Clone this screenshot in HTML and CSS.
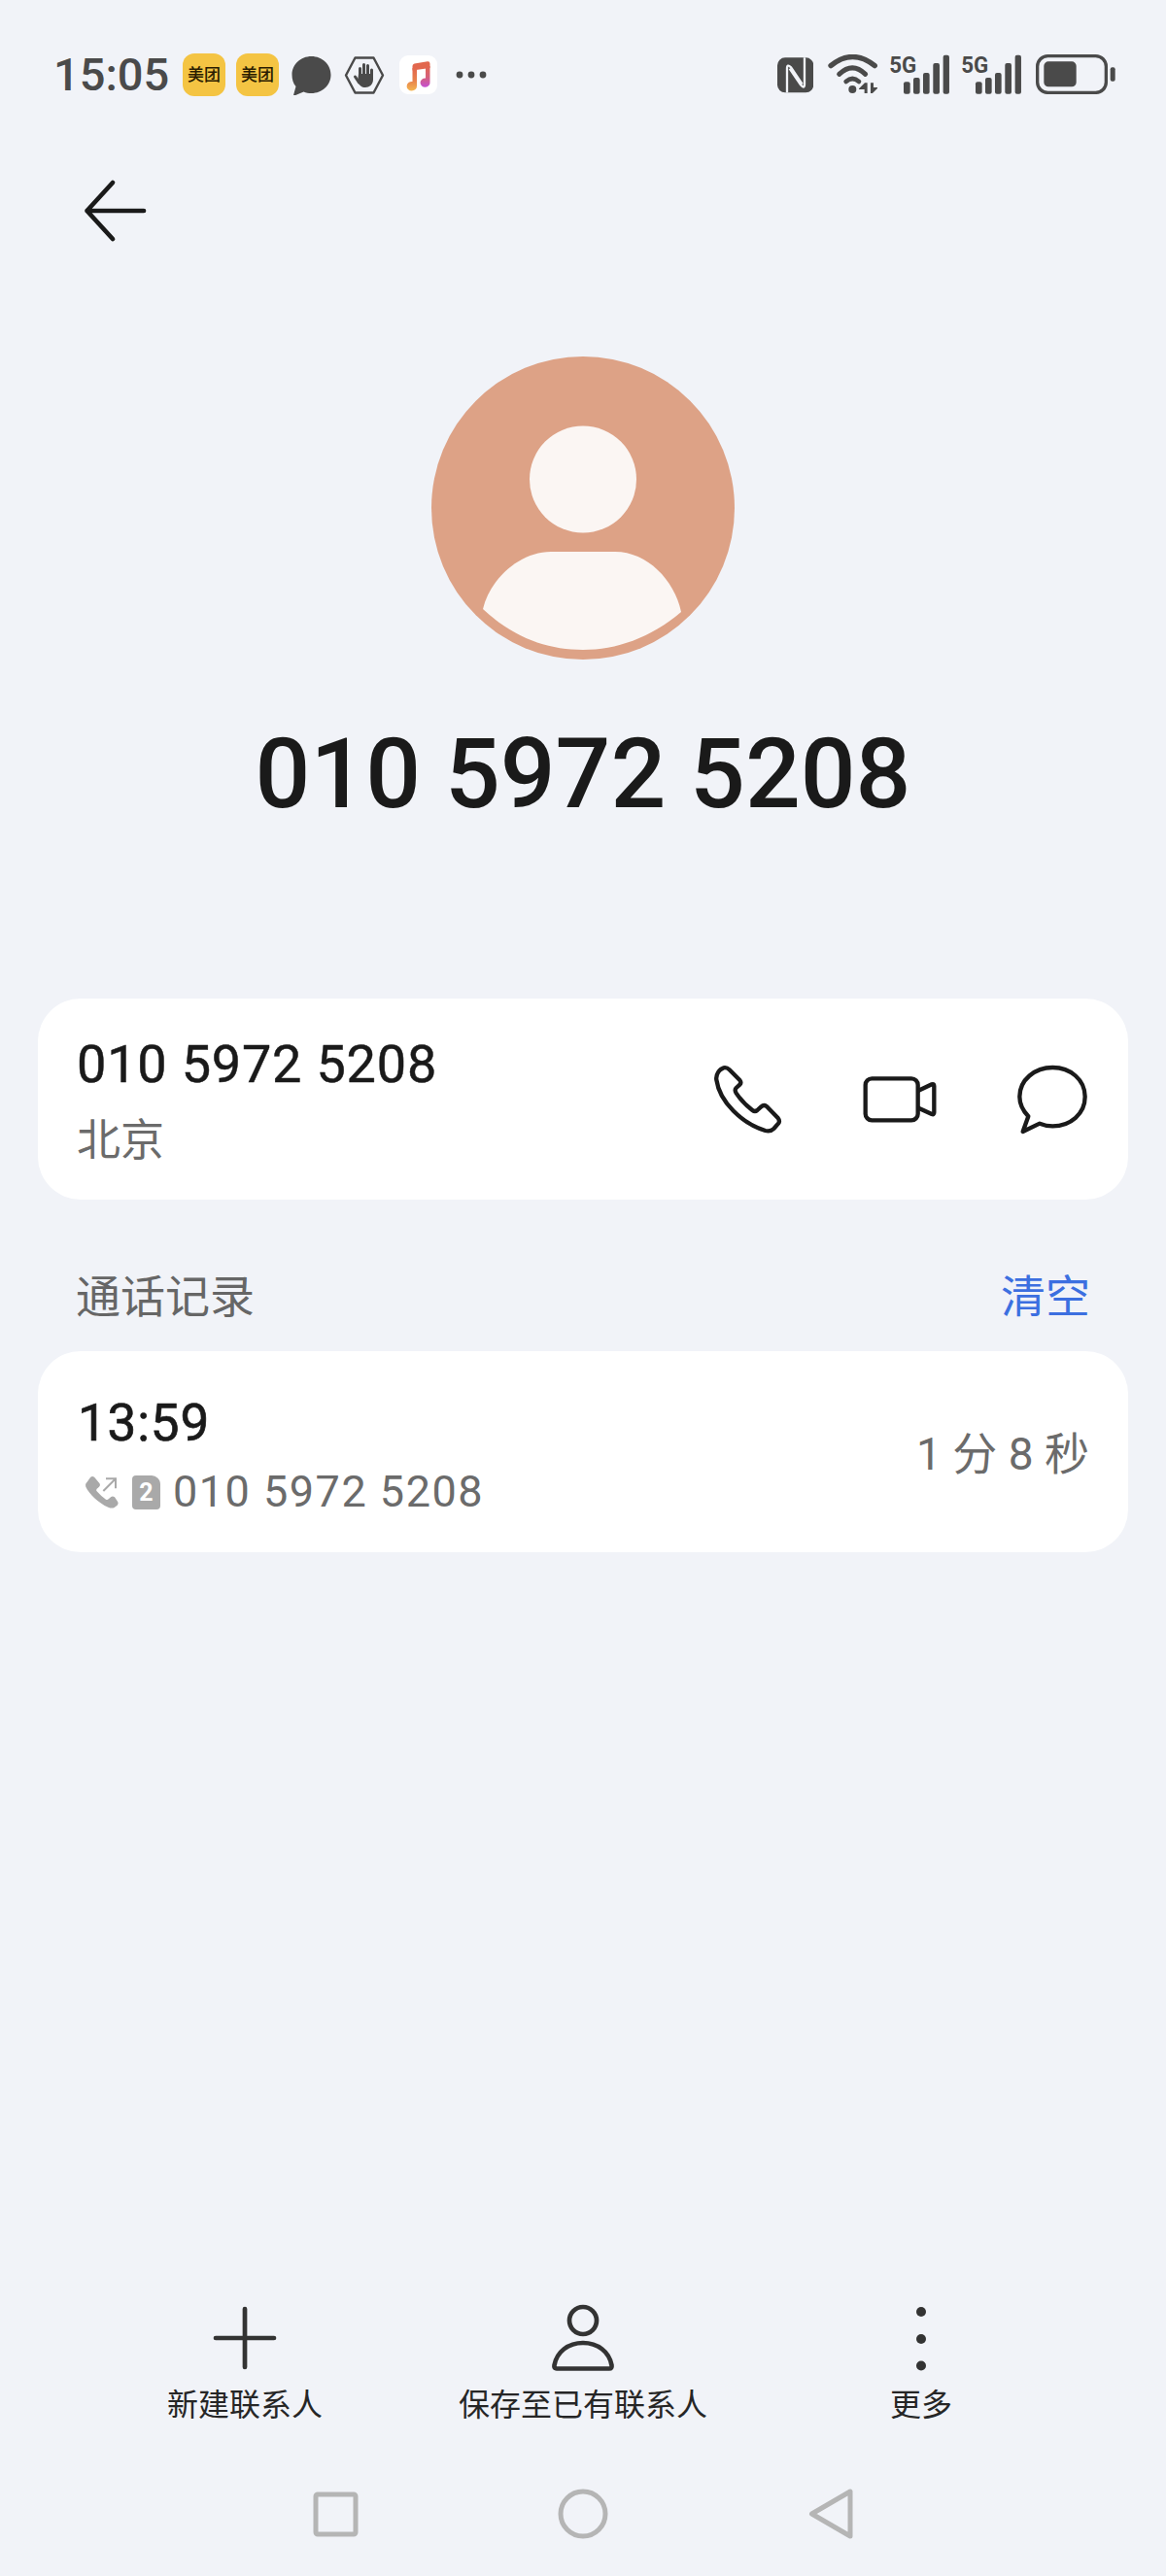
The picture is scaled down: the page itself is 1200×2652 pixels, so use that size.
FILE: index.html
```html
<!DOCTYPE html>
<html lang="zh-CN">
<head>
    <meta charset="UTF-8">
    <meta name="viewport" content="width=device-width, initial-scale=1.0">
    <title>010 5972 5208</title>
    <link rel="stylesheet" href="styles.css">
</head>
<body>
<div class="screen">
    <!-- status bar -->
    <div class="status-bar">
        <span class="clock">15:05</span>
        <span class="app-badge">美团</span>
        <span class="app-badge">美团</span>
        <svg class="st-chat" width="41" height="40" viewBox="0 0 41 40"><path class="st-fill" d="M20.5 0C31.5 0 40.5 8.3 40.5 19S31.5 38 20.5 38C17.5 38 15 37.5 12.5 36.500L3 40.500C2 40.500 2 40 2.300 39L4.500 31C1.700 27.800 .5 23.500 .5 19 .5 8.300 9.500 0 20.500 0Z"/></svg>
        <svg class="st-hand" width="42" height="39" viewBox="0 0 42 39">
            <path class="st-line" d="M11.500 1.500H30.500L40 19.500 30.500 37.500H11.500L2 19.500Z" stroke-width="2.400"/>
            <path class="st-line" stroke-width="3" stroke-linecap="round" d="M16.500 20V12.500M20.500 20V8.500M24.500 20V9.500M28.500 20V14M11.500 21 15.500 27"/>
            <path class="st-fill" d="M15 18H30V24C30 29 26 32 22 32 18 32 16 30 14 26Z"/>
        </svg>
        <svg class="st-music" width="39" height="40" viewBox="0 0 39 40">
            <defs>
                <linearGradient id="noteLeft" x1="0" y1="0" x2="0" y2="1">
                    <stop offset="0" stop-color="#e2674e"/>
                    <stop offset=".55" stop-color="#e8824c"/>
                    <stop offset="1" stop-color="#f4b650"/>
                </linearGradient>
                <linearGradient id="noteRight" x1="0" y1="0" x2="0" y2="1">
                    <stop offset="0" stop-color="#e2674e"/>
                    <stop offset=".55" stop-color="#d4607e"/>
                    <stop offset="1" stop-color="#c44fd2"/>
                </linearGradient>
            </defs>
            <rect width="39" height="40" rx="9" fill="#fff"/>
            <path fill="#e2674e" d="M13.500 11Q13.500 9 15.500 8.500L29 6.200Q31.500 6 31.500 8.500V13L13.500 15.500Z"/>
            <path fill="url(#noteLeft)" d="M13.500 13H18V31.500A5.200 4.800 0 1 1 13.500 27Z"/>
            <path fill="url(#noteRight)" d="M27 11H31.500V27.500A5 4.600 0 1 1 27 23.500Z"/>
        </svg>
        <svg class="st-more" width="32" height="8" viewBox="0 0 32 8">
            <circle class="st-fill" cx="4" cy="4" r="3.400"/><circle class="st-fill" cx="16" cy="4" r="3.400"/><circle class="st-fill" cx="28" cy="4" r="3.400"/>
        </svg>

        <div class="status-right">
            <svg class="st-nfc" width="37.300" height="40.700" viewBox="120 78 112 122">
                <rect class="st-fill" x="120" y="88" width="112" height="108" rx="24"/>
                <path class="nfc-cut" d="M150 196V122Q150 106 162 118L197 170M204 88V170Q204 186 192 172L158 122"/>
            </svg>
            <svg class="st-wifi" width="51.300" height="40.700" viewBox="276 78 154 122">
                <path class="st-line" stroke-width="16" stroke-linecap="round" d="M285 113Q352 58 421 113"/>
                <path class="st-line" stroke-width="15" stroke-linecap="round" d="M311 139Q352 100 392 139"/>
                <path class="st-line" stroke-width="14" stroke-linecap="round" d="M332 162Q352 144 372 162"/>
                <circle class="st-fill" cx="352" cy="186" r="12"/>
                <path class="st-fill" d="M372 184 390 166H398V198H389V186H372Z M408 198V166H417V180H432L414 198Z"/>
            </svg>
            <svg class="st-signal" width="62.300" height="40.700" viewBox="465 78 187 122">
                <text class="st-gen" x="466" y="135" textLength="84" lengthAdjust="spacingAndGlyphs">5G</text>
                <rect class="st-fill" x="510" y="163" width="20" height="37" rx="6"/>
                <rect class="st-fill" x="540" y="150" width="20" height="50" rx="6"/>
                <rect class="st-fill" x="570" y="135" width="20" height="65" rx="6"/>
                <rect class="st-fill" x="601" y="105" width="20" height="95" rx="6"/>
                <rect class="st-fill" x="632" y="80" width="19" height="120" rx="6"/>
            </svg>
            <svg class="st-signal" width="62.300" height="40.700" viewBox="465 78 187 122">
                <text class="st-gen" x="466" y="135" textLength="84" lengthAdjust="spacingAndGlyphs">5G</text>
                <rect class="st-fill" x="510" y="163" width="20" height="37" rx="6"/>
                <rect class="st-fill" x="540" y="150" width="20" height="50" rx="6"/>
                <rect class="st-fill" x="570" y="135" width="20" height="65" rx="6"/>
                <rect class="st-fill" x="601" y="105" width="20" height="95" rx="6"/>
                <rect class="st-fill" x="632" y="80" width="19" height="120" rx="6"/>
            </svg>
            <svg class="st-battery" width="82.700" height="40.700" viewBox="920 78 248 122">
                <rect class="st-line" x="925" y="83" width="212" height="113" rx="32" stroke-width="10"/>
                <rect class="st-fill" x="945" y="100" width="100" height="78" rx="14"/>
                <rect class="st-fill" x="1150" y="118" width="15" height="43" rx="6"/>
            </svg>
        </div>
    </div>

    <!-- header -->
    <div class="top-nav">
        <svg width="70" height="68" viewBox="0 0 70 68"><path class="icon-line" stroke-width="4.700" d="M32 5 5.500 34 32 63M5.500 34H64"/></svg>
    </div>

    <div class="profile">
        <svg class="avatar" width="312" height="312" viewBox="0 0 312 312">
            <circle cx="156" cy="156" r="156" fill="#dda286"/>
            <circle cx="156" cy="126.500" r="55" fill="#fbf6f3"/>
            <path fill="#fbf6f3" d="M53 260C60 230 90 201 123 201H189C222 201 250 230 257 263 225 290 190 302 156 302 120 302 85 290 53 260Z"/>
        </svg>
        <div class="profile-number">010 5972 5208</div>
    </div>

    <!-- number card -->
    <div class="card number-card">
        <div class="number-info">
            <div class="number-main">010 5972 5208</div>
            <div class="number-place">北京</div>
        </div>
        <div class="number-actions">
            <svg width="80" height="80" viewBox="90 156 240 240"><path class="icon-line" stroke-width="13" d="M128 183 137 178Q147 176 155 184L187 216Q193 224 187 230L176 240Q170 246 176 256 195 285 226 309 234 315 241 309L253 298Q261 291 270 297L305 333Q312 342 306 350L292 366Q282 376 266 372C195 350 125 285 115 215 112 195 128 183 128 183Z"/></svg>
            <svg width="80" height="80" viewBox="561 156 240 240"><rect class="icon-line" stroke-width="13" x="575" y="211" width="162" height="129" rx="20"/><path class="icon-line" stroke-width="13" d="M739 248 780 229Q787 226 787 234V316Q787 324 780 321L739 302"/></svg>
            <svg width="80" height="80" viewBox="1029 156 240 240"><path class="icon-line" stroke-width="13" d="M1110 350C1125 356 1135 358 1150 358 1205 358 1250 320 1250 267 1250 215 1205 177 1150 177 1095 177 1048 215 1048 267 1048 290 1058 310 1075 328L1058 375Z"/></svg>
        </div>
    </div>

    <!-- call log -->
    <div class="section-head">
        <span class="section-title">通话记录</span>
        <span class="section-clear">清空</span>
    </div>
    <div class="card log-card">
        <div class="log-info">
            <div class="log-time">13:59</div>
            <div class="log-detail">
                <svg class="log-phone" width="34" height="35" viewBox="85 290 102 105">
                    <path class="log-icon" d="M90 310 100 296Q106 290 113 296L128 314Q132 320 127 325L120 331Q117 335 120 339 132 353 148 364 152 367 156 363L164 356Q169 352 175 357L184 370Q188 377 183 382L174 389Q166 393 155 388C125 375 95 345 86 325 84 318 86 314 90 310Z"/>
                    <path class="log-arrow" d="M140 338 176 302M148 300H178V330"/>
                </svg>
                <span class="sim-badge">2</span>
                <span class="log-number">010 5972 5208</span>
            </div>
        </div>
        <div class="log-duration">1 分 8 秒</div>
    </div>

    <!-- bottom toolbar -->
    <div class="toolbar">
        <div class="tool">
            <svg width="72" height="72" viewBox="0 0 72 72"><path class="tool-line" d="M6 36H66M36 6V66"/></svg>
            <span class="tool-label">新建联系人</span>
        </div>
        <div class="tool">
            <svg width="72" height="72" viewBox="0 0 72 72"><circle class="tool-line" cx="36" cy="18" r="14"/><path class="tool-line" d="M9 67.500H63Q66 67.500 65.500 64C63 50 51 41 36 41 21 41 9 50 6.500 64 6 67.500 9 67.500 9 67.500Z"/></svg>
            <span class="tool-label">保存至已有联系人</span>
        </div>
        <div class="tool">
            <svg width="72" height="72" viewBox="0 0 72 72"><circle class="tool-dot" cx="36" cy="9" r="5"/><circle class="tool-dot" cx="36" cy="37" r="5"/><circle class="tool-dot" cx="36" cy="64.500" r="5"/></svg>
            <span class="tool-label">更多</span>
        </div>
    </div>

    <!-- navigation keys -->
    <div class="nav-keys">
        <svg width="52" height="52" viewBox="0 0 52 52"><rect class="key-line" x="6" y="6" width="41" height="41" rx="2"/></svg>
        <svg width="52" height="52" viewBox="0 0 52 52"><circle class="key-line" cx="26" cy="26" r="23"/></svg>
        <svg width="52" height="52" viewBox="0 0 52 52"><path class="key-line" d="M6.500 26 46 3V49Z"/></svg>
    </div>
</div>
</body>
</html>
```

FILE: styles.css
```css
/* Base */
* {
    box-sizing: border-box;
}

body {
    margin: 0;
    background-color: #f1f3f8;
    font-family: Roboto, "Noto Sans CJK SC", sans-serif;
    color: #1a1a1a;
}

svg {
    display: block;
    flex: none;
}

.screen {
    width: 1200px;
    height: 2652px;
    display: flex;
    flex-direction: column;
    overflow: hidden;
}

/* Status bar */
.status-bar {
    height: 100px;
    padding: 55px 51px 0 55px;
    display: flex;
    align-items: flex-start;
}

.clock {
    width: 119px;
    margin-right: 14px;
    font-size: 47px;
    line-height: 44px;
    font-weight: 500;
    color: #4a4a4a;
}

.app-badge {
    width: 44px;
    height: 44px;
    margin-right: 11px;
    border-radius: 12px;
    background-color: #f4c443;
    color: #2a1c00;
    font-size: 17px;
    line-height: 44px;
    font-weight: 500;
    text-align: center;
}

.st-chat {
    margin: 3px 13px 0 2px;
}

.st-hand {
    margin: 3px 15px 0 0;
}

.st-music {
    margin: 2px 19px 0 0;
}

.st-more {
    margin-top: 18px;
}

.status-right {
    margin-left: auto;
    display: flex;
    align-items: flex-start;
    margin-top: 1px;
}

.st-fill {
    fill: #4a4a4a;
}

.st-line {
    fill: none;
    stroke: #4a4a4a;
    stroke-linejoin: round;
}

.nfc-cut {
    fill: none;
    stroke: #f1f3f8;
    stroke-width: 7;
}

.st-gen {
    fill: #4a4a4a;
    font-size: 70px;
    font-weight: 700;
}

.st-nfc {
    margin-right: 14.7px;
}

.st-wifi {
    margin-right: 11.7px;
}

.st-signal {
    margin-right: 11.7px;
    overflow: visible;
}

.st-battery {
    margin-left: 3.7px;
}

/* Header */
.top-nav {
    height: 267px;
    padding: 83px 0 0 84px;
}

.icon-line {
    fill: none;
    stroke: #1a1a1a;
    stroke-linecap: round;
    stroke-linejoin: round;
}

.profile {
    height: 661px;
    display: flex;
    flex-direction: column;
    align-items: center;
}

.profile-number {
    margin-top: 53px;
    font-size: 100px;
    line-height: 130px;
    font-weight: 500;
    color: #1a1a1a;
}

/* Cards */
.card {
    width: 1122px;
    height: 207px;
    margin-left: 39px;
    border-radius: 44px;
    background-color: #fff;
    display: flex;
    align-items: center;
    justify-content: space-between;
}

.number-card {
    padding: 0 38px 0 40px;
}

.number-info {
    padding-top: 8px;
}

.number-main {
    font-size: 54px;
    line-height: 60px;
    letter-spacing: .8px;
    font-weight: 400;
    -webkit-text-stroke: .5px #1a1a1a;
}

.number-place {
    margin-top: 19px;
    font-size: 45px;
    line-height: 60px;
    color: #6b6b6b;
}

.number-actions {
    display: flex;
    gap: 77px;
}

.section-head {
    height: 156px;
    padding: 70px 39px 0 39px;
    margin-left: 39px;
    width: 1122px;
    display: flex;
    justify-content: space-between;
    font-size: 46px;
    line-height: 60px;
}

.section-title {
    color: #666;
}

.section-clear {
    color: #3c6fe0;
}

.log-card {
    padding: 0 40px 0 41px;
}

.log-info {
    padding-top: 4px;
}

.log-time {
    font-size: 53px;
    line-height: 60px;
    letter-spacing: .8px;
    font-weight: 400;
    -webkit-text-stroke: .7px #1a1a1a;
}

.log-phone {
    margin-left: 8px;
}

.log-detail {
    margin-top: 19px;
    display: flex;
    align-items: center;
    height: 44px;
}

.log-icon {
    fill: #a9a9a9;
}

.log-arrow {
    fill: none;
    stroke: #a9a9a9;
    stroke-width: 6;
}

.sim-badge {
    width: 29px;
    height: 35px;
    margin: 0 13px 0 14px;
    background-color: #a9a9a9;
    border-radius: 4px 9px 4px 4px;
    color: #fff;
    font-size: 25px;
    line-height: 35px;
    font-weight: 700;
    text-align: center;
}

.log-number {
    font-size: 45px;
    line-height: 44px;
    letter-spacing: 1.5px;
    color: #6b6b6b;
}

.log-duration {
    padding-bottom: 3px;
    font-size: 46px;
    color: #6b6b6b;
}

/* Bottom toolbar */
.toolbar {
    margin-top: auto;
    padding: 0 78px;
    display: grid;
    grid-template-columns: repeat(3, 348px);
}

.tool {
    display: flex;
    flex-direction: column;
    align-items: center;
}

.tool-label {
    margin-top: 11px;
    font-size: 32px;
    line-height: 44px;
    color: #262626;
}

.tool-line {
    fill: none;
    stroke: #333;
    stroke-width: 4.7;
    stroke-linecap: round;
    stroke-linejoin: round;
}

.tool-dot {
    fill: #333;
}

/* Navigation keys */
.nav-keys {
    height: 90px;
    margin-top: 64px;
    padding-left: 319px;
    display: flex;
    gap: 203px;
}

.key-line {
    fill: none;
    stroke: #b5b5b5;
    stroke-width: 5;
    stroke-linejoin: round;
}
```
